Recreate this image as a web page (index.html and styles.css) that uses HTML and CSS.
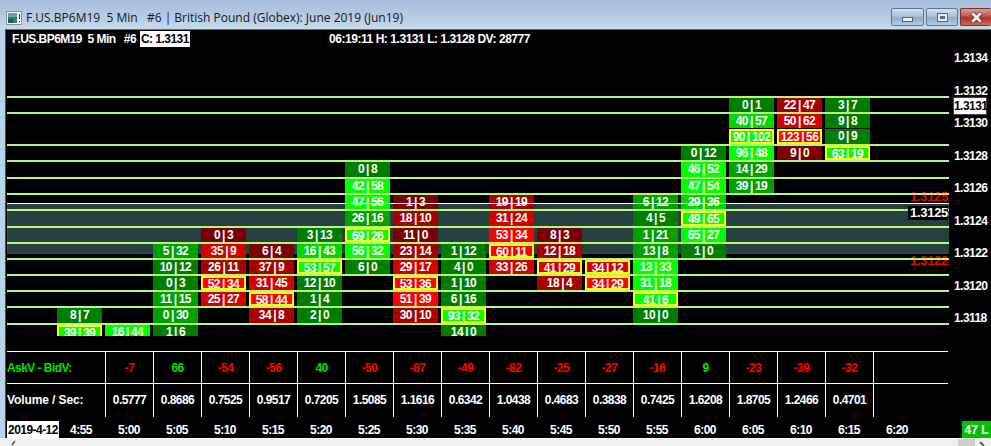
FILE: index.html
```html
<!DOCTYPE html>
<html lang="en">
<head>
<meta charset="utf-8">
<title>F.US.BP6M19 5 Min</title>
<link rel="stylesheet" href="styles.css">
</head>
<body>
<div class="window">
  <header class="titlebar">
    <svg class="app-icon" width="16" height="14" viewBox="0 0 16 14"><rect x="0.5" y="0.5" width="15" height="13" fill="#f4f4f4" stroke="#8a8f96"/><rect x="2" y="2" width="9" height="10" fill="#2f7f78"/><rect x="2" y="2" width="9" height="4" fill="#6f9bb0"/><rect x="2" y="8" width="5" height="4" fill="#1d5a4a"/><rect x="13" y="3" width="1" height="5" fill="#333"/><rect x="13" y="10" width="1" height="1" fill="#333"/></svg>
    <span class="title">F.US.BP6M19  5 Min   #6 | British Pound (Globex): June 2019 (Jun19)</span>
    <div class="controls">
      <div class="ctl ctl-min"><span class="glyph-min"></span></div>
      <div class="ctl ctl-max"><span class="glyph-max"></span></div>
      <div class="ctl ctl-close"><svg width="13" height="11" viewBox="0 0 13 11"><path d="M2 1 L11 10 M11 1 L2 10" stroke="#4a3a3a" stroke-width="4.4"/><path d="M2.3 1.3 L10.7 9.7 M10.7 1.3 L2.3 9.7" stroke="#f4f0f0" stroke-width="2.8"/></svg></div>
    </div>
  </header>

  <div class="frame">
    <div class="upper">
      <div class="main">
        <div class="legend">
          <span class="legend-sym">F.US.BP6M19  5 Min   #6</span>
          <span class="legend-close">C: 1.3131</span>
          <span class="legend-info">06:19:11 H: 1.3131 L: 1.3128 DV: 28777</span>
        </div>

        <div class="rows">
          <div class="row">
            <i class="c15 g1">0 | 1</i><i class="c16 r2">22 | 47</i><i class="c17 g1">3 | 7</i>
          </div>
          <div class="row">
            <i class="c15 g3">40 | 57</i><i class="c16 r3">50 | 62</i><i class="c17 g1">9 | 8</i>
          </div>
          <div class="row noline">
            <i class="c15 g4 hi">90 | 102</i><i class="c16 r4 hi">123 | 56</i><i class="c17 g1">0 | 9</i>
          </div>
          <div class="row">
            <i class="c14 g1">0 | 12</i><i class="c15 g4">96 | 48</i><i class="c16 r1">9 | 0</i><i class="c17 g4 hi">63 | 19</i>
          </div>
          <div class="row tall">
            <i class="c7 g1">0 | 8</i><i class="c14 g4">46 | 52</i><i class="c15 g2">14 | 29</i>
          </div>
          <div class="row">
            <i class="c7 g4">42 | 58</i><i class="c14 g4">47 | 54</i><i class="c15 g2">39 | 19</i>
          </div>
          <div class="row">
            <i class="c7 g4">47 | 56</i><i class="c8 r1">1 | 3</i><i class="c10 r2">19 | 19</i><i class="c13 g2">6 | 12</i><i class="c14 g3">29 | 36</i>
          </div>
          <div class="row tall">
            <i class="c7 g2">26 | 16</i><i class="c8 r2">18 | 10</i><i class="c10 r3">31 | 24</i><i class="c13 g1">4 | 5</i><i class="c14 g4 hi">49 | 65</i>
          </div>
          <div class="row">
            <i class="c4 r1">0 | 3</i><i class="c6 g1">3 | 13</i><i class="c7 g4 hi">69 | 26</i><i class="c8 r1">11 | 0</i><i class="c10 r4">53 | 34</i><i class="c11 r1">8 | 3</i><i class="c13 g2">1 | 21</i><i class="c14 g4">65 | 27</i>
          </div>
          <div class="row">
            <i class="c3 g2">5 | 32</i><i class="c4 r3">35 | 9</i><i class="c5 r1">6 | 4</i><i class="c6 g3">16 | 43</i><i class="c7 g4">56 | 32</i><i class="c8 r2">23 | 14</i><i class="c9 g1">1 | 12</i><i class="c10 r4 hi">60 | 11</i><i class="c11 r2">12 | 18</i><i class="c13 g2">13 | 8</i><i class="c14 g1">1 | 0</i>
          </div>
          <div class="row">
            <i class="c3 g1">10 | 12</i><i class="c4 r2">26 | 11</i><i class="c5 r2">37 | 9</i><i class="c6 g4 hi">53 | 57</i><i class="c7 g1">6 | 0</i><i class="c8 r3">29 | 17</i><i class="c9 g1">4 | 0</i><i class="c10 r3">33 | 26</i><i class="c11 r3 hi">41 | 29</i><i class="c12 r3 hi">34 | 12</i><i class="c13 g4">13 | 33</i>
          </div>
          <div class="row">
            <i class="c3 g1">0 | 3</i><i class="c4 r4 hi">52 | 34</i><i class="c5 r3">31 | 45</i><i class="c6 g1">12 | 10</i><i class="c8 r4 hi">53 | 36</i><i class="c9 g1">1 | 10</i><i class="c11 r2">18 | 4</i><i class="c12 r4 hi">34 | 29</i><i class="c13 g4">31 | 18</i>
          </div>
          <div class="row">
            <i class="c3 g2">11 | 15</i><i class="c4 r3">25 | 27</i><i class="c5 r4 hi">58 | 44</i><i class="c6 g1">1 | 4</i><i class="c8 r4">51 | 39</i><i class="c9 g1">6 | 16</i><i class="c13 g4 hi">41 | 6</i>
          </div>
          <div class="row tall">
            <i class="c1 g1">8 | 7</i><i class="c3 g2">0 | 30</i><i class="c5 r2">34 | 8</i><i class="c6 g1">2 | 0</i><i class="c8 r2">30 | 10</i><i class="c9 g4 hi">93 | 32</i><i class="c13 g1">10 | 0</i>
          </div>
          <div class="row clipped">
            <i class="c1 g4 hi">39 | 39</i><i class="c2 g4">16 | 44</i><i class="c3 g1">1 | 6</i><i class="c9 g1">14 | 0</i>
          </div>
        </div>

        <div class="stats">
          <div class="stat-row">
            <div class="stat-label up">AskV - BidV:</div>
            <div class="stat neg">-7</div><div class="stat up">66</div><div class="stat neg">-54</div><div class="stat neg">-56</div><div class="stat up">40</div><div class="stat neg">-50</div><div class="stat neg">-87</div><div class="stat neg">-49</div><div class="stat neg">-82</div><div class="stat neg">-25</div><div class="stat neg">-27</div><div class="stat neg">-16</div><div class="stat up">9</div><div class="stat neg">-23</div><div class="stat neg">-39</div><div class="stat neg">-32</div><div class="stat"></div>
          </div>
          <div class="stat-row">
            <div class="stat-label vol">Volume / Sec:</div>
            <div class="stat">0.5777</div><div class="stat">0.8686</div><div class="stat">0.7525</div><div class="stat">0.9517</div><div class="stat">0.7205</div><div class="stat">1.5085</div><div class="stat">1.1616</div><div class="stat">0.6342</div><div class="stat">1.0438</div><div class="stat">0.4683</div><div class="stat">0.3838</div><div class="stat">0.7425</div><div class="stat">1.6208</div><div class="stat">1.8705</div><div class="stat">1.2466</div><div class="stat">0.4701</div><div class="stat"></div>
          </div>
        </div>
      </div>

      <div class="axis">
        <span>1.3134</span><span>1.3132</span><span>1.3130</span><span>1.3128</span><span>1.3126</span><span>1.3124</span><span>1.3122</span><span>1.3120</span><span>1.3118</span>
      </div>

      <div class="band"></div>
      <div class="white-line"></div>
      <span class="tag-red tag-red-high">1.3125</span>
      <span class="tag-red tag-red-low">1.3122</span>
      <span class="tag-last">1.3125</span>
      <span class="tag-close">1.3131</span>
    </div>

    <div class="dates">
      <span class="date">2019-4-12</span>
      <div class="times"><span>4:55</span><span>5:00</span><span>5:05</span><span>5:10</span><span>5:15</span><span>5:20</span><span>5:25</span><span>5:30</span><span>5:35</span><span>5:40</span><span>5:45</span><span>5:50</span><span>5:55</span><span>6:00</span><span>6:05</span><span>6:10</span><span>6:15</span><span>6:20</span></div>
      <span class="ticks">47 L</span>
    </div>
  </div>

  <div class="scrollbar">
    <svg class="arrow" width="8" height="8" viewBox="0 0 8 8"><path d="M5 1 L2 5" stroke="#555" stroke-width="1.6" fill="none"/></svg>
    <div class="thumb"></div>
    <svg class="arrow" width="8" height="8" viewBox="0 0 8 8"><path d="M2 2 L6 6" stroke="#555" stroke-width="1.8" fill="none"/></svg>
  </div>
</div>
</body>
</html>
```

FILE: styles.css
```css
* { box-sizing: border-box; }
html, body { margin: 0; padding: 0; background: #b9d0e8; }
body { font-family: "Liberation Sans", Arial, sans-serif; overflow: hidden; }

.window {
  width: 991px;
  height: 446px;
  display: flex;
  flex-direction: column;
  overflow: hidden;
  background: #b9d1ea;
}

/* Title bar */
.titlebar {
  height: 29px;
  flex: none;
  display: flex;
  align-items: flex-start;
  background: linear-gradient(#a3bcd9, #c6d9ec);
}
.app-icon { margin: 11px 0 0 6px; flex: none; }
.title {
  margin: 10px 0 0 4px;
  font: 12px/16px "Open Sans", "Noto Sans", sans-serif;
  color: #10161e;
  white-space: pre;
}
.controls { margin-left: auto; display: flex; gap: 2px; padding-top: 8px; }
.ctl {
  height: 18px;
  border: 1px solid #62768f;
  border-radius: 2px;
  display: flex;
  align-items: center;
  justify-content: center;
  background: linear-gradient(#d3e0ee 0, #a9c2dd 45%, #8dabcb 55%, #b5cce3 100%);
}
.ctl-min { width: 33px; }
.ctl-max { width: 32px; }
.ctl-close {
  width: 31px;
  border-right: 0;
  border-color: #6e3a38;
  background: linear-gradient(#dc9a8e 0, #c8574a 45%, #b23024 55%, #cd6a58 100%);
}
.glyph-min { width: 11px; height: 5px; margin-top: 5px; background: #e9eef4; border: 1px solid #55667c; }
.glyph-max { width: 11px; height: 9px; background: #e9eef4; border: 1px solid #55667c; position: relative; }
.glyph-max::after { content: ""; position: absolute; left: 2px; right: 2px; top: 2px; bottom: 2px; background: #55667c; }

/* Chart frame */
.frame {
  flex: none;
  height: 409px;
  margin-left: 5px;
  border-left: 1px solid #4d4d4d;
  border-top: 1px solid #6c6c6c;
  background: #000;
  color: #fff;
  font-weight: 700;
  font-size: 12px;
  letter-spacing: -0.55px;
  display: flex;
  flex-direction: column;
}
.upper { height: 391px; display: flex; position: relative; flex: none; }
.main { width: 943px; flex: none; position: relative; z-index: 1; }

.legend { height: 16px; position: relative; line-height: 15px; }
.legend-sym { position: absolute; left: 6px; top: 2px; white-space: pre; }
.legend-close {
  position: absolute;
  left: 134px;
  top: 1px;
  width: 50px;
  height: 16px;
  background: #fff;
  color: #000;
  padding-left: 1px;
  line-height: 17px;
  white-space: nowrap;
}
.legend-info { position: absolute; left: 323px; top: 2px; white-space: nowrap; letter-spacing: -0.45px; }

/* Footprint rows */
.rows { margin: 50px 0 0 1px; width: 942px; }
.row {
  height: 16px;
  border-top: 2px solid #b6f67a;
  padding-left: 50px;
  display: grid;
  grid-template-columns: repeat(17, 45px);
  grid-template-rows: 1fr;
  column-gap: 3px;
}
.row.tall { height: 17px; }
.row.noline { border-top: 1px solid transparent; }
.row.clipped { height: 13px; grid-template-rows: 16px; overflow: hidden; }
.row i {
  font-style: normal;
  grid-row: 1;
  text-align: center;
  line-height: 15px;
  overflow: hidden;
  white-space: nowrap;
  word-spacing: -0.7px;
  color: #fff;
}
.c1 { grid-column: 1; } .c2 { grid-column: 2; } .c3 { grid-column: 3; }
.c4 { grid-column: 4; } .c5 { grid-column: 5; } .c6 { grid-column: 6; }
.c7 { grid-column: 7; } .c8 { grid-column: 8; } .c9 { grid-column: 9; }
.c10 { grid-column: 10; } .c11 { grid-column: 11; } .c12 { grid-column: 12; }
.c13 { grid-column: 13; } .c14 { grid-column: 14; } .c15 { grid-column: 15; }
.c16 { grid-column: 16; } .c17 { grid-column: 17; }

.g1 { background: #007d00; }
.g2 { background: #00a000; }
.g3 { background: #00d800; }
.g4 { background: #00ff00; }
.r1 { background: #7a0000; }
.r2 { background: #a80000; }
.r3 { background: #d40000; }
.r4 { background: #ff0000; }
.row i.hi { border: 2px solid #ffff00; line-height: 12px; }

/* Overlays on the plot */
.band {
  position: absolute;
  left: 1px;
  top: 174px;
  width: 942px;
  height: 50px;
  background: #264040;
  border-left: 1px solid #e00000;
  border-bottom: 1px solid #e00000;
  z-index: 0;
}
.white-line { position: absolute; left: 1px; top: 173px; width: 942px; height: 1px; background: #fff; z-index: 2; }
.tag-red { position: absolute; left: 904px; color: #f00000; z-index: 0; line-height: 14px; font-size: 13px; letter-spacing: -0.3px; }
.tag-red-high { top: 160px; }
.tag-red-low { top: 224px; }
.tag-last { position: absolute; left: 902px; top: 176px; width: 40px; height: 14px; background: #000; text-align: right; line-height: 14px; font-size: 13px; letter-spacing: -0.3px; z-index: 3; }
.tag-close {
  position: absolute;
  left: 947px;
  top: 67px;
  width: 34px;
  height: 18px;
  background: #fff;
  border: 1px solid #444;
  color: #000;
  text-align: center;
  line-height: 16px;
  white-space: nowrap;
  z-index: 3;
}

.axis { width: 42px; flex: none; padding: 20px 0 0 5px; display: flex; flex-direction: column; }
.axis span { height: 32.5px; line-height: 16px; flex: none; }

/* Stats table */
.stats { margin: 15px 0 0 1px; width: 941px; }
.stat-row {
  height: 32px;
  border-top: 1px solid #fff;
  display: grid;
  grid-template-columns: 98px repeat(16, 48px) 75px;
}
.stat-label { line-height: 33px; white-space: nowrap; }
.stat-label.vol { letter-spacing: -0.1px; }
.stat { border-left: 1px solid #fff; text-align: center; line-height: 33px; }
.up { color: #00e000; }
.neg { color: #ff0000; }

/* Time axis */
.dates { height: 17px; flex: none; display: flex; align-items: stretch; line-height: 18px; margin-left: 1px; }
.date { width: 52px; background: #fff; color: #000; text-align: center; margin-right: -2px; position: relative; white-space: nowrap; }
.times { display: grid; grid-template-columns: repeat(18, 48px); }
.times span { text-align: center; }
.ticks { margin-left: auto; width: 29px; background: #00c000; text-align: center; letter-spacing: 0; white-space: nowrap; }

/* Bottom scrollbar */
.scrollbar { flex: none; height: 8px; background: #f0f0f0; display: flex; border-top: 1px solid #fff; overflow: hidden; }
.arrow { flex: none; margin-left: 10px; margin-top: 1px; }
.thumb { width: 17px; margin-left: auto; margin-right: 0; background: #cdcdcd; }
.thumb + .arrow { margin-left: 3px; margin-right: 5px; }
```
